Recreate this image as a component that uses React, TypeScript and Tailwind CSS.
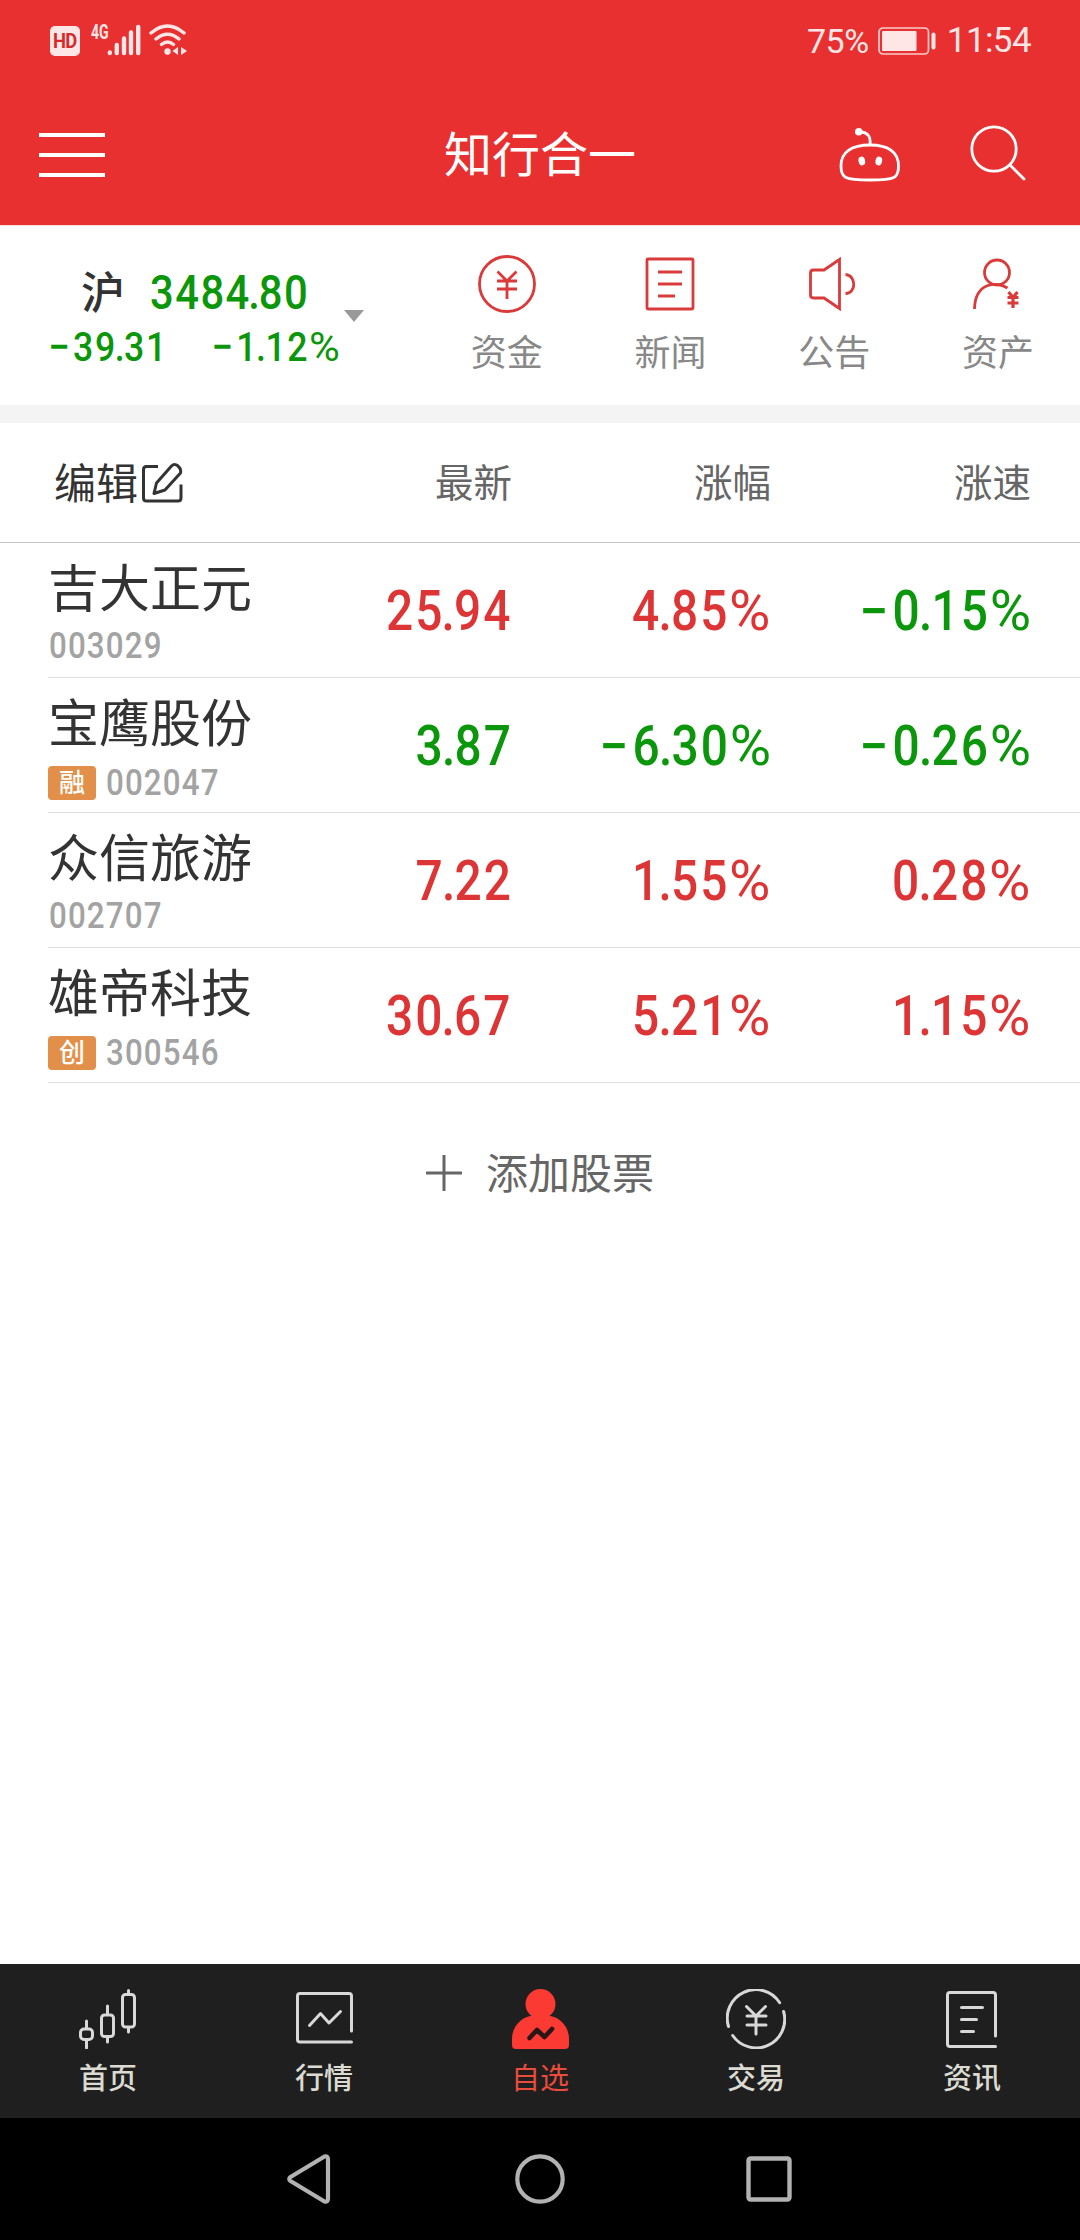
import type { ReactNode } from 'react';

type Tone = 'up' | 'down';

const toneClass: Record<Tone, string> = {
  up: 'text-[#dd3535]',
  down: 'text-[#0c960c]',
};

const stocks = [
  { name: '吉大正元', code: '003029', tag: '', price: '25.94', change: '4.85%', speed: '−0.15%', tone: 'up', speedTone: 'down' },
  { name: '宝鹰股份', code: '002047', tag: '融', price: '3.87', change: '−6.30%', speed: '−0.26%', tone: 'down', speedTone: 'down' },
  { name: '众信旅游', code: '002707', tag: '', price: '7.22', change: '1.55%', speed: '0.28%', tone: 'up', speedTone: 'up' },
  { name: '雄帝科技', code: '300546', tag: '创', price: '30.67', change: '5.21%', speed: '1.15%', tone: 'up', speedTone: 'up' },
] as const;

// Narrow quote digits with a tight decimal point
function Digits({ value, className }: { value: string; className: string }) {
  const negative = value.startsWith('−');
  const percent = value.endsWith('%');
  const [whole, fraction] = value.replace('−', '').replace('%', '').split('.');
  return (
    <span className={`inline-block scale-x-[0.87] whitespace-nowrap ${className}`}>
      {negative && <span className="mr-[0.04em] inline-block origin-right scale-x-[1.08]">−</span>}
      {whole}
      {fraction && <span className="mx-[-0.06em]">.</span>}
      {fraction}
      {percent && <span className="ml-[0.13em] inline-block origin-right scale-x-[1.18] font-normal">%</span>}
    </span>
  );
}

function StatusBar() {
  return (
    <div className="flex h-[84px] items-start justify-between pt-[22px] pr-[49px] pl-[50px] text-[#ffe6e6]">
      <div className="flex">
        <div className="mt-1 flex h-[30px] w-[30px] items-center justify-center rounded-[5px] bg-[#ffe6e6] text-[20px] font-bold tracking-[-0.8px] text-[#d42c2c]">
          <span className="scale-x-[0.92]">HD</span>
        </div>
        <span className="mt-px ml-[11px] w-[16px] origin-left scale-x-[0.7] text-[20px] leading-[18px] font-bold">4G</span>
        <svg className="mt-[2px]" width="34" height="32" viewBox="0 0 34 32" stroke="currentColor" strokeWidth="4.4" strokeLinecap="round">
          <path d="M2.8 29v-.5M9.8 29V21M17 29v-14.5M24 29V8.5M31.2 29V3" />
        </svg>
        <svg className="mt-[2px] ml-[8px]" width="39" height="32" viewBox="0 0 39 32" fill="none" stroke="currentColor" strokeWidth="3.4" strokeLinecap="round">
          <path d="M2 9Q18.500-5 35 9M7 15q11.500-9.500 23 0M12.500 20.500q6-4.800 12 0" />
          <circle cx="18.500" cy="27.500" r="3.200" fill="currentColor" stroke="none" />
          <path d="M29 23v8l-5.500-4zM32 23v8l6-4z" fill="currentColor" stroke="none" />
        </svg>
      </div>
      <div className="flex items-center">
        <span className="text-[34px] leading-[38px] tracking-[-0.4px]">75%</span>
        <svg className="ml-[9px]" width="60" height="28" viewBox="0 0 60 28" fill="none" stroke="currentColor">
          <rect x="1" y="1" width="49.500" height="26" rx="4" strokeWidth="1.700" opacity=".85" />
          <rect x="4" y="4" width="34.500" height="20" rx="1" fill="currentColor" stroke="none" />
          <rect x="53.500" y="5.500" width="4" height="17" rx="2" fill="currentColor" stroke="none" />
        </svg>
        <span className="ml-[9px] text-[35px] leading-[38px] tracking-[-0.6px]">11:54</span>
      </div>
    </div>
  );
}

function TitleBar() {
  return (
    <div className="grid h-[141px] grid-cols-[1fr_auto_1fr] items-center pr-[54px] pl-[39px]">
      <div className="flex w-[66px] flex-col gap-[16px]">
        <div className="h-1 bg-white" />
        <div className="h-1 bg-white" />
        <div className="h-1 bg-white" />
      </div>
      <h1 className="mt-[3px] ml-[15px] text-[48px] leading-none text-white">知行合一</h1>
      <div className="flex items-center justify-end gap-[69px]">
        <svg width="62" height="60" viewBox="0 0 62 60" fill="none" stroke="#fff" strokeWidth="2.800">
          <path d="M31 20c18 0 28.500 7 28.500 21 0 12-3 14-28.500 14S2 53 2 41C2 27 13 20 31 20z" />
          <path d="M21 7c8 0 11 5 10 13" />
          <circle cx="19.800" cy="6.800" r="3.800" fill="#fff" stroke="none" />
          <ellipse cx="22.800" cy="36" rx="3.300" ry="4.400" fill="#fff" stroke="none" transform="rotate(-12 22.800 36)" />
          <ellipse cx="39.800" cy="36" rx="3.300" ry="4.400" fill="#fff" stroke="none" transform="rotate(12 39.800 36)" />
        </svg>
        <svg width="56" height="60" viewBox="0 0 56 60" fill="none" stroke="#fff" strokeWidth="2.800" strokeLinecap="round">
          <circle cx="24" cy="24" r="22.200" />
          <path d="M40.500 40.500L54 54" />
        </svg>
      </div>
    </div>
  );
}

function Shortcut({ label, children }: { label: string; children: ReactNode }) {
  return (
    <div className="flex flex-col items-center">
      <svg width="60" height="60" viewBox="0 0 60 60" fill="none" stroke="#d93a3a" strokeWidth="2.800">
        {children}
      </svg>
      <span className="mt-[22px] text-[36px] leading-[36px] text-[#888]">{label}</span>
    </div>
  );
}

function IndexPanel() {
  return (
    <section className="flex h-[180px] border-t border-[#ffdcdc]">
      <div className="flex w-[425px] pt-[40px] pl-[50px] font-medium text-[#0c960c]">
        <div className="w-[292px]">
          <div className="flex items-center pl-[31px]">
            <span className="mt-[3px] text-[44px] leading-[50px] text-[#333]">沪</span>
            <Digits value="3484.80" className="ml-[25px] origin-left text-[48px] leading-[50px] tracking-[0.035em]" />
          </div>
          <div className="mt-[4px] flex justify-between text-[41px] leading-[48px] tracking-[0.045em]">
            <Digits value="−39.31" className="origin-left" />
            <Digits value="−1.12%" className="origin-right" />
          </div>
        </div>
        <svg className="mt-[44px] ml-[2px]" width="20" height="12" viewBox="0 0 20 12" fill="#999">
          <path d="M0 0h20L10 12z" />
        </svg>
      </div>
      <div className="grid flex-1 grid-cols-4 pt-[28px]">
        <Shortcut label="资金">
          <circle cx="30" cy="30" r="27.500" />
          <path d="M20.500 17.500L30 27l9.500-9.500M20 27h20M20 35h20M30 27v18" />
        </Shortcut>
        <Shortcut label="新闻">
          <rect x="6" y="5" width="46" height="50" rx="1" />
          <path d="M17 18h24M17 30h24M17 42h17" />
        </Shortcut>
        <Shortcut label="公告">
          <path d="M6.500 19q0-3 3-3h10.500L35.500 5.500v49L20 44H9.500q-3 0-3-3zM41.500 20.500c11 1 11 19 0 19" />
        </Shortcut>
        <Shortcut label="资产">
          <circle cx="29" cy="18.500" r="12.500" />
          <path d="M6.500 55C7 28 29 27 39.500 34" />
          <path d="M40.500 38l4.500 5.500 4.500-5.500M39.500 43.500h11M39.500 49h11M45 43v11" strokeWidth="3.200" />
        </Shortcut>
      </div>
    </section>
  );
}

function TableHead() {
  return (
    <div className="grid h-[120px] grid-cols-[457px_259px_260px] items-center border-b border-[#c4c4c4] pl-[55px] text-right text-[38.5px] text-[#666]">
      <div className="flex items-center justify-between">
        <div className="flex items-center text-[42px] text-[#333]">
          <span className="mt-[4px] -ml-px leading-[50px]">编辑</span>
          <svg className="ml-[4px]" width="41" height="42" viewBox="0 0 41 42" fill="none" stroke="#333" strokeWidth="3" strokeLinejoin="round">
            <path d="M16 4.500H4.500q-3 0-3 3V36q0 3 3 3H36q3 0 3-3V22.500" />
            <path d="M12 31.500l2.500-10.500L29.500 4q3-3 6.500 0t2.500 7L23 28z" />
          </svg>
        </div>
        <span className="pt-[2px]">最新</span>
      </div>
      <span className="pt-[2px]">涨幅</span>
      <span className="pt-[2px]">涨速</span>
    </div>
  );
}

function StockRow({ stock }: { stock: (typeof stocks)[number] }) {
  return (
    <div className="ml-12 grid h-[135px] grid-cols-[465px_260px_260px] items-center border-b border-[#dedede] text-right text-[55px] leading-none font-medium tracking-[0.043em]">
      <div className="flex h-full items-center justify-between">
        <div className="h-full pt-[19px] text-left font-normal tracking-normal">
          <div className="text-[51px] leading-[56px] text-[#333]">{stock.name}</div>
          <div className={stock.tag ? 'mt-[11px] flex items-center' : 'mt-[9px] flex items-center pl-px'}>
            {stock.tag && (
              <span className="mr-[10px] flex h-[34px] w-12 items-center justify-center rounded-[4px] bg-[#e29049] pt-px text-[26px] font-medium text-white">
                {stock.tag}
              </span>
            )}
            <Digits value={stock.code} className="mt-px origin-left text-[36px] leading-[36px] font-medium tracking-[0.036em] text-[#a3a3a3]" />
          </div>
        </div>
        <Digits value={stock.price} className={`mt-[2px] origin-right ${toneClass[stock.tone]}`} />
      </div>
      <div className="pt-[2px]">
        <Digits value={stock.change} className={`origin-right ${toneClass[stock.tone]}`} />
      </div>
      <div className="pt-[2px]">
        <Digits value={stock.speed} className={`origin-right ${toneClass[stock.speedTone]}`} />
      </div>
    </div>
  );
}

function Tab({ label, active, children }: { label: string; active?: boolean; children: ReactNode }) {
  return (
    <div className="flex flex-col items-center pt-[25px]">
      <svg width="60" height="60" viewBox="0 0 60 60" fill="none" stroke="#d8d8d8" strokeWidth="3" strokeLinecap="round" strokeLinejoin="round">
        {children}
      </svg>
      <span className={active ? 'mt-[14px] text-[29px] leading-[32px] text-[#e94b3c]' : 'mt-[14px] text-[29px] leading-[32px] font-medium text-[#dbdbd3]'}>
        {label}
      </span>
    </div>
  );
}

function TabBar() {
  return (
    <nav className="grid h-[154px] grid-cols-5 bg-[#1f1f1f]">
      <Tab label="首页">
        <path d="M8.500 32v7.500M8.500 51v8M29.500 17v8M29.500 49v4M50.500 1.500V4M50.500 39v4" />
        <rect x="2.500" y="40" width="12" height="10.500" rx="3.500" />
        <rect x="23.500" y="26" width="12" height="21.500" rx="3" />
        <rect x="44.500" y="5.500" width="12" height="32.500" rx="3" />
      </Tab>
      <Tab label="行情">
        <path d="M57.500 42V7q0-2.500-2.500-2.500H6Q3.500 4.500 3.500 7v43.500q0 2.500 2.500 2.500h51.500" />
        <path d="M15.500 36.500l11-12L35 34l11.500-11.500" />
      </Tab>
      <Tab label="自选" active>
        <circle cx="30.500" cy="15" r="15" fill="#fb3a34" stroke="none" />
        <path d="M2 56V50C2 36 13 27 24 26.500h13C48 27 59 36 59 50v6q0 4-4 4H6q-4 0-4-4z" fill="#fb3a34" stroke="none" />
        <path d="M19.500 49L27 41l7.500 7L42 40" stroke="#2b1616" strokeWidth="4.600" />
      </Tab>
      <Tab label="交易">
        <path d="M53.700 13.700A28.500 28.500 0 0 0 2.500 37.500M6.700 46.500A28.500 28.500 0 0 0 57.600 22.500" />
        <path d="M20.500 17.500L30 27l9.500-9.500M21 27h19M21 36h19M30 27v18" />
      </Tab>
      <Tab label="资讯">
        <path d="M53.500 47V6q0-2.500-2.500-2.500H8Q5.500 3.500 5.500 6v49q0 2.500 2.500 2.500h45.500" />
        <path d="M19.500 18.500h21M19.500 30.500h15M19.500 42.500h12" />
      </Tab>
    </nav>
  );
}

function SystemNav() {
  return (
    <div className="flex h-[122px] items-center bg-black pl-[284px]">
      <svg width="50" height="54" viewBox="0 0 50 54" fill="none" stroke="#b2b2b2" strokeWidth="4.200" strokeLinejoin="round">
        <path d="M40.500 4.500q3.500-1 3.500 3v39q0 4-3.500 3L6.500 29q-2.500-2 0-4z" />
      </svg>
      <svg className="ml-[181px]" width="50" height="54" viewBox="0 0 50 54" fill="none" stroke="#b2b2b2" strokeWidth="4.200">
        <circle cx="25" cy="27" r="22.700" />
      </svg>
      <svg className="ml-[179px]" width="50" height="54" viewBox="0 0 50 54" fill="none" stroke="#b2b2b2" strokeWidth="4.400">
        <rect x="4.500" y="6.500" width="41" height="41" rx="2" />
      </svg>
    </div>
  );
}

export default function App() {
  return (
    <div className="flex h-[2240px] w-[1080px] flex-col overflow-hidden bg-white font-[Roboto,'Noto_Sans_CJK_SC',sans-serif]">
      <header className="bg-[#e83030]">
        <StatusBar />
        <TitleBar />
      </header>
      <IndexPanel />
      <div className="h-[18px] bg-[#f4f4f4]" />
      <main className="flex-1">
        <TableHead />
        {stocks.map((stock) => (
          <StockRow key={stock.code} stock={stock} />
        ))}
        <button className="mx-auto mt-[60px] flex items-center gap-[24px] text-[42px] leading-[56px] text-[#666]">
          <svg width="36" height="36" viewBox="0 0 36 36" stroke="#666" strokeWidth="3">
            <path d="M18 0v36M0 18h36" />
          </svg>
          <span className="pt-[4px]">添加股票</span>
        </button>
      </main>
      <TabBar />
      <SystemNav />
    </div>
  );
}
